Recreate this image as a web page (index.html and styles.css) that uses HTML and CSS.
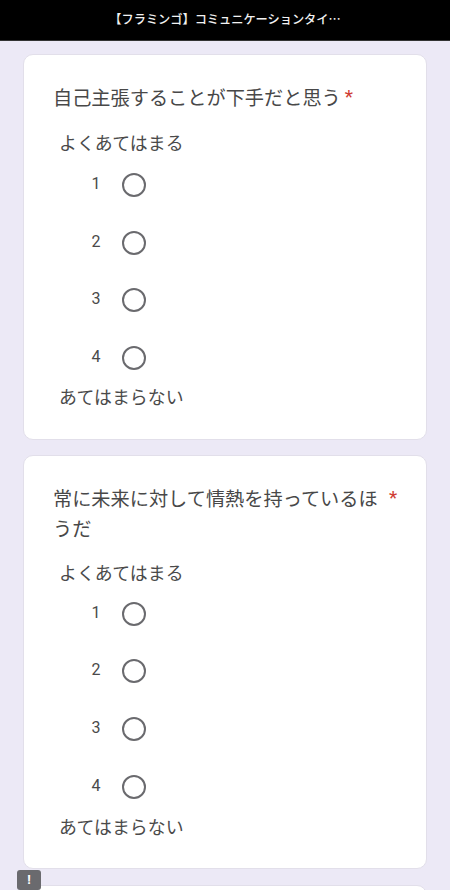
FILE: index.html
```html
<!DOCTYPE html>
<html lang="ja">
<head>
<meta charset="utf-8">
<title>フォーム</title>
<link rel="stylesheet" href="styles.css">
</head>
<body>
<header class="topbar"><span class="topbar-title">【フラミンゴ】コミュニケーションタイ…</span></header>
<main class="page">
  <section class="card">
    <div class="question"><span class="q-text">自己主張することが下手だと思う</span><span class="req">*</span></div>
    <div class="scale-label">よくあてはまる</div>
    <div class="scale">
      <div class="opt"><span class="num">1</span><span class="radio"></span></div>
      <div class="opt"><span class="num">2</span><span class="radio"></span></div>
      <div class="opt"><span class="num">3</span><span class="radio"></span></div>
      <div class="opt"><span class="num">4</span><span class="radio"></span></div>
    </div>
    <div class="scale-label end">あてはまらない</div>
  </section>
  <section class="card tall">
    <div class="question wrap"><span class="q-text">常に未来に対して情熱を持っているほうだ</span><span class="req">*</span></div>
    <div class="scale-label">よくあてはまる</div>
    <div class="scale">
      <div class="opt"><span class="num">1</span><span class="radio"></span></div>
      <div class="opt"><span class="num">2</span><span class="radio"></span></div>
      <div class="opt"><span class="num">3</span><span class="radio"></span></div>
      <div class="opt"><span class="num">4</span><span class="radio"></span></div>
    </div>
    <div class="scale-label end">あてはまらない</div>
  </section>
  <section class="card next">
    <span class="badge">!</span>
  </section>
</main>
</body>
</html>
```
FILE: styles.css
```css
* { box-sizing: border-box; }
html, body { margin: 0; height: 890px; overflow: hidden; }
body {
  background: #ece9f6;
  font-family: "Noto Sans CJK JP", "Roboto", sans-serif;
  color: #3f3f3f;
}
.topbar {
  height: 41px;
  background: #000;
  border-bottom: 1px solid #333;
  display: flex;
  align-items: center;
  justify-content: center;
}
.topbar-title {
  color: #f2f2f2;
  font-size: 12.2px;
  font-weight: 500;
  line-height: 18px;
  margin-top: -3px;
}
.page {
  padding: 13px 23px 0;
  display: flex;
  flex-direction: column;
  gap: 15px;
}
.card {
  background: #fff;
  border: 1px solid #e2dfea;
  border-radius: 10px;
  padding: 27px 29px 29px;
}
.card.tall { padding-bottom: 28px; }
.card.next {
  position: relative;
  height: 100px;
  flex: none;
  margin-top: 1px;
}
.question {
  display: flex;
  font-size: 19.2px;
  line-height: 30px;
  color: #484848;
}
.question .q-text { flex: none; max-width: 328px; }
.question .req {
  color: #cf3d33;
  margin-left: 4px;
  font-family: "Roboto", sans-serif;
}
.question.wrap .req { margin-left: 8px; }
.scale-label {
  font-size: 17.9px;
  line-height: 28px;
  margin: 16px 0 0 6px;
  color: #4a4a4a;
}
.question.wrap + .scale-label { margin-top: 15px; }
.scale-label.end { margin-top: 12px; }
.tall .scale-label.end { margin-top: 13px; }
.scale {
  display: flex;
  flex-direction: column;
  gap: 33.5px;
  margin-top: 17px;
  padding-left: 38px;
}
.tall .scale { margin-top: 16px; gap: 33.8px; }
.opt {
  display: flex;
  align-items: center;
  height: 24px;
  gap: 21px;
}
.num {
  font-family: "Roboto", sans-serif;
  font-size: 16px;
  line-height: 20px;
  width: 10px;
  text-align: center;
  color: #4a4a4a;
  margin-top: -2px;
}
.radio {
  width: 24px;
  height: 24px;
  border: 2.5px solid #6a6a6e;
  border-radius: 50%;
  flex: none;
}
.badge {
  position: absolute;
  left: -7px;
  top: -16px;
  width: 24px;
  height: 20px;
  background: #6a6a6e;
  border-radius: 3px;
  color: #fff;
  font: 700 13px/19px "Roboto", sans-serif;
  text-align: center;
}
```
